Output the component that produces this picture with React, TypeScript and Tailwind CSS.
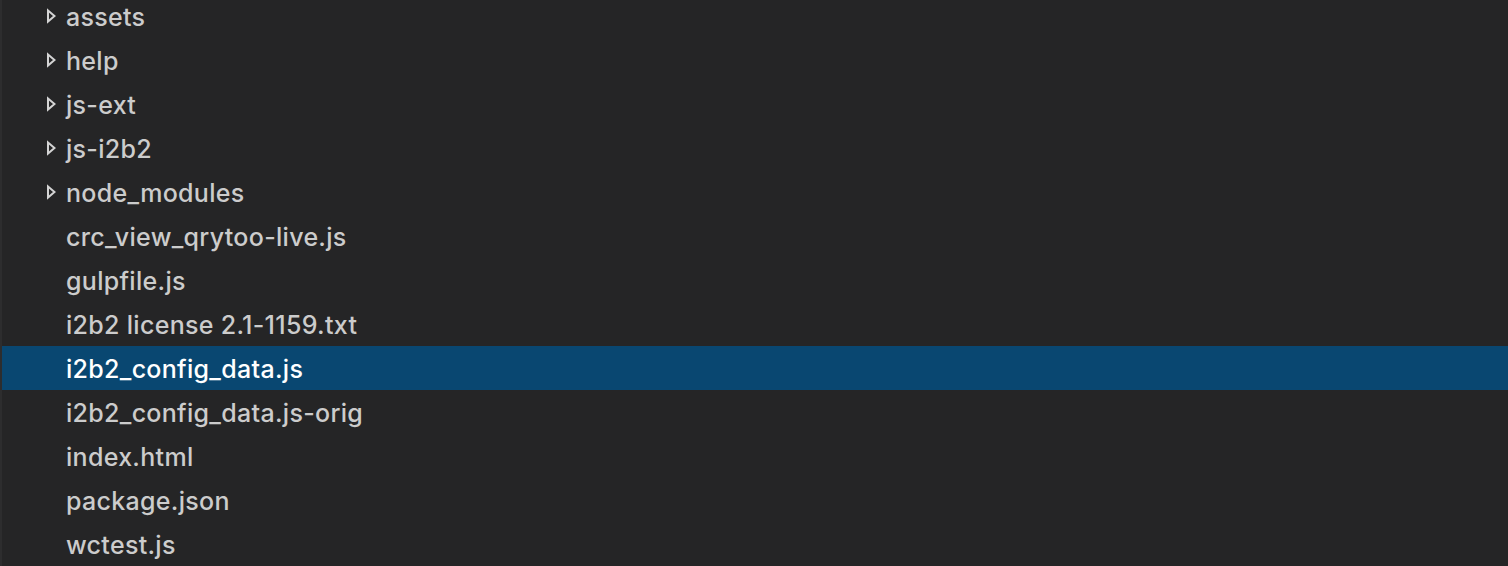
const items: { name: string; folder?: boolean; selected?: boolean }[] = [
  { name: "assets", folder: true },
  { name: "help", folder: true },
  { name: "js-ext", folder: true },
  { name: "js-i2b2", folder: true },
  { name: "node_modules", folder: true },
  { name: "crc_view_qrytoo-live.js" },
  { name: "gulpfile.js" },
  { name: "i2b2 license 2.1-1159.txt" },
  { name: "i2b2_config_data.js", selected: true },
  { name: "i2b2_config_data.js-orig" },
  { name: "index.html" },
  { name: "package.json" },
  { name: "wctest.js" },
];

const Chevron = () => (
  <svg width="10" height="16" viewBox="0 0 10 16" className="shrink-0">
    <path d="M2 2.5 L8.5 8 L2 13.5 Z" fill="none" stroke="#d4d4d4" strokeWidth="2" strokeLinejoin="miter" />
  </svg>
);

export default function App() {
  return (
    <div className="h-[566px] w-full overflow-hidden bg-[#252526] flex">
      <div className="w-[2px] bg-[#2d2d2e] shrink-0" />
      <ul className="flex-1 -mt-[6px]" style={{ fontFamily: "Inter, 'Noto Sans', sans-serif" }}>
        {items.map((it) => (
          <li
            key={it.name}
            className={`h-[44px] flex items-center ${it.selected ? "bg-[#094771] text-white" : "text-[#cccccc]"}`}
          >
            <span className="w-[64px] shrink-0 flex justify-end pr-[10px]">
              {it.folder && <Chevron />}
            </span>
            <span className="text-[25px] leading-none tracking-[0.3px] pt-[2px] font-[450]">{it.name}</span>
          </li>
        ))}
      </ul>
    </div>
  );
}
